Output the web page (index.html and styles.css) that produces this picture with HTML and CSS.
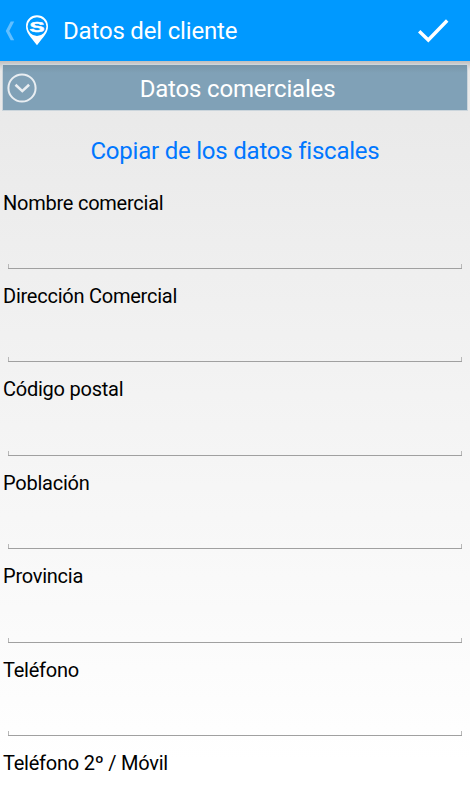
FILE: index.html
```html
<!DOCTYPE html>
<html lang="es">
<head>
  <meta charset="UTF-8" />
  <meta name="viewport" content="width=device-width, initial-scale=1.0"/>
  <title>Datos del cliente</title>
  <link rel="stylesheet" href="styles.css">
</head>
<body>
  <header class="barra">
    <svg class="volver" width="10" height="20" viewBox="0 0 10 20">
      <path d="M5.7 0.5H9.2L4.3 10L9.2 19.2H5.7L0.8 10Z" fill="#62bfff"/>
    </svg>
    <svg class="logo" width="24" height="32" viewBox="0 0 24 32">
      <path fill="#fff" fill-rule="evenodd" d="M12 0.3C5.7 0.3 1 5 1 11.3C1 18 5.5 21.5 12 30.3C18.5 21.5 23 18 23 11.3C23 5 18.3 0.3 12 0.3ZM12 2.2A9.4 9.4 0 1 1 12 21A9.4 9.4 0 1 1 12 2.2Z"/>
      <text class="logo-letra" transform="translate(12 17) scale(1.5 1)" text-anchor="middle">S</text>
    </svg>
    <h1>Datos del cliente</h1>
    <svg class="guardar" width="32" height="26" viewBox="0 0 32 26">
      <path d="M2.2 13.3L11.3 22L30.2 2.5" fill="none" stroke="#fff" stroke-width="3.4"/>
    </svg>
  </header>

  <main class="contenido">
    <div class="seccion">
      <svg class="desplegar" width="30" height="30" viewBox="0 0 30 30" fill="none" stroke="#e9eef2">
        <circle cx="15" cy="15" r="13.6" stroke-width="2"/>
        <path d="M8.5 11.8L15.3 18.1L22.1 11.8" stroke-width="2.6"/>
      </svg>
      <h2>Datos comerciales</h2>
    </div>

    <a class="copiar">Copiar de los datos fiscales</a>

    <div class="campo">
      <label for="nombre">Nombre comercial</label>
      <input type="text" id="nombre">
    </div>
    <div class="campo">
      <label for="direccion">Dirección Comercial</label>
      <input type="text" id="direccion">
    </div>
    <div class="campo">
      <label for="postal">Código postal</label>
      <input type="text" id="postal">
    </div>
    <div class="campo">
      <label for="poblacion">Población</label>
      <input type="text" id="poblacion">
    </div>
    <div class="campo">
      <label for="provincia">Provincia</label>
      <input type="text" id="provincia">
    </div>
    <div class="campo">
      <label for="telefono">Teléfono</label>
      <input type="text" id="telefono">
    </div>
    <div class="campo">
      <label for="movil">Teléfono 2º / Móvil</label>
      <input type="text" id="movil">
    </div>
  </main>
</body>
</html>
```

FILE: styles.css
```css
* {
  box-sizing: border-box;
}
body {
  margin: 0;
  height: 800px;
  overflow: hidden;
  display: flex;
  flex-direction: column;
  font-family: Roboto, sans-serif;
  color: #000;
  background: linear-gradient(#e6e6e6, #fff 95%);
}
h1, h2 {
  margin: 0;
  font-weight: 400;
}
.barra {
  flex: none;
  display: flex;
  align-items: center;
  height: 61px;
  padding: 0 21px 0 5px;
  background: #0099ff;
  color: #fff;
}
.logo {
  margin-left: 10px;
}
.logo-letra {
  font: bold 15px "Liberation Sans", sans-serif;
  fill: #fff;
  stroke: #fff;
  stroke-width: 0.5px;
}
h1 {
  flex: 1;
  margin-left: 14px;
  font-size: 24px;
  line-height: 28px;
  letter-spacing: -0.18px;
}
/* sombra bajo la barra */
.contenido {
  flex: 1;
  min-height: 0;
  overflow: hidden;
  padding: 4px 3px 0;
  background: linear-gradient(rgba(0, 0, 0, 0.18), rgba(0, 0, 0, 0.1) 4px, transparent 10px);
}
.seccion {
  display: flex;
  align-items: center;
  height: 45px;
  padding: 0 29px 0 4px;
  background: linear-gradient(#7895a8, #80a1b7 8px);
  box-shadow: 0 0 0 1px #cbd5dc;
  color: #fff;
}
h2 {
  flex: 1;
  font-size: 24px;
  line-height: 28px;
  letter-spacing: -0.18px;
  text-align: center;
  padding-top: 2px;
}
.copiar {
  display: block;
  margin: 27px 0 25.6px;
  font-size: 24px;
  line-height: 28px;
  letter-spacing: -0.22px;
  text-align: center;
  color: #0077ff;
}
.campo {
  height: 93.4px;
}
.campo label {
  display: block;
  font-size: 20px;
  line-height: 24px;
  letter-spacing: -0.24px;
}
/* línea inferior con una marca corta en cada extremo */
.campo input {
  display: block;
  width: 454px;
  height: 54.4px;
  margin: 0 5px;
  padding: 20px 8px 4px;
  border: none;
  outline: none;
  font: 20px Roboto, sans-serif;
  background:
    linear-gradient(#a0a0a0, #a0a0a0) bottom / 100% 1px no-repeat,
    linear-gradient(#b8b8b8, #b8b8b8) left bottom / 1px 5px no-repeat,
    linear-gradient(#b8b8b8, #b8b8b8) right bottom / 1px 5px no-repeat;
}
```
